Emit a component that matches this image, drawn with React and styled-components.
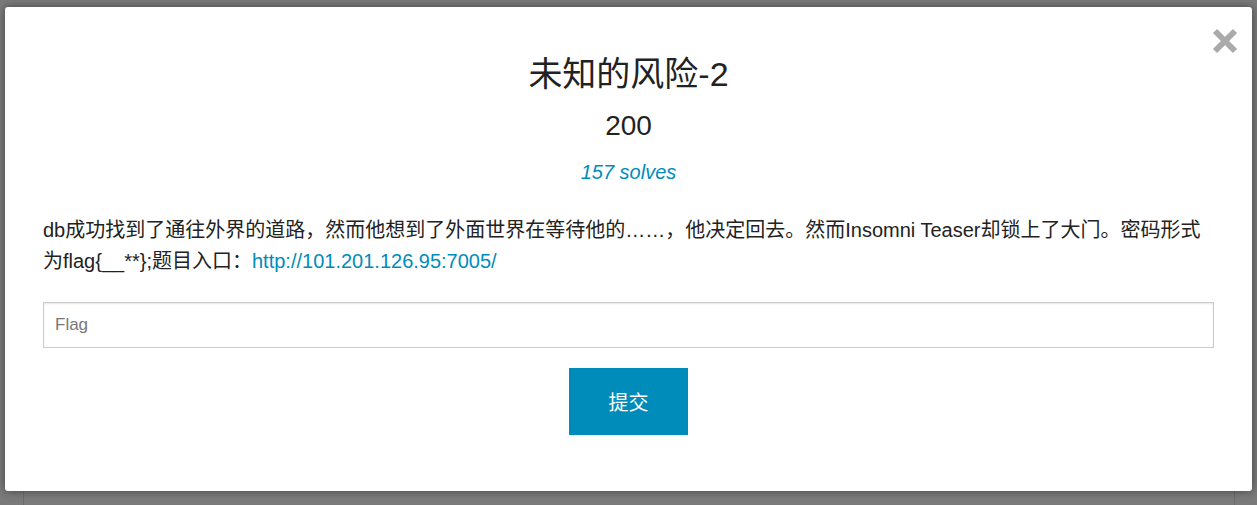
import React from 'react';
import styled, { createGlobalStyle } from 'styled-components';

const GlobalStyle = createGlobalStyle`
  html, body {
    margin: 0;
    padding: 0;
    background: #7a7a7a;
    font-family: "Liberation Sans", "Noto Sans CJK SC", sans-serif;
  }
`;

const Backdrop = styled.div`
  height: 505px;
  padding-top: 7px;
  box-sizing: border-box;
  display: flex;
  flex-direction: column;
  overflow: hidden;
`;

const Modal = styled.div`
  position: relative;
  margin: 0 5px;
  background: #fff;
  border-radius: 3px;
  box-shadow: 0 0 8px rgba(0, 0, 0, 0.45);
  padding: 47px 38px 56px;
  display: flex;
  flex-direction: column;
  color: #222;
`;

const BehindPage = styled.div`
  flex: 1;
  margin: 0 22px 0 23px;
  border-left: 1px solid #6a6a6a;
  border-right: 1px solid #6a6a6a;
`;

const CloseButton = styled.button`
  position: absolute;
  top: 21px;
  right: 14px;
  width: 26px;
  height: 26px;
  padding: 0;
  border: none;
  background: none;
  cursor: pointer;
  display: flex;
`;

const Title = styled.h2`
  margin: 0;
  font-size: 34px;
  font-weight: normal;
  line-height: 40px;
  text-align: center;
`;

const Points = styled.h3`
  margin: 12px 0 0;
  font-size: 28px;
  font-weight: normal;
  line-height: 40px;
  text-align: center;
`;

const Solves = styled.div`
  margin-top: 14px;
  font-size: 20px;
  line-height: 24px;
  font-style: italic;
  color: #008cba;
  text-align: center;
`;

const Description = styled.p`
  margin: 31px 0 0;
  font-size: 20px;
  line-height: 31px;
  color: #222;
`;

const Link = styled.a`
  color: #008cba;
  text-decoration: none;
`;

const FlagInput = styled.input`
  margin-top: 25px;
  height: 46px;
  box-sizing: border-box;
  width: 100%;
  border: 1px solid #ccc;
  box-shadow: inset 0 1px 2px rgba(0, 0, 0, 0.1);
  padding: 0 11px;
  font-family: inherit;
  font-size: 17px;
  color: #222;
  outline: none;
  &::placeholder {
    color: #777;
  }
`;

const SubmitButton = styled.button`
  margin: 20px auto 0;
  width: 119px;
  height: 67px;
  border: none;
  background: #008cba;
  color: #fff;
  font-family: inherit;
  font-size: 20px;
  cursor: pointer;
`;

export default function App() {
  return (
    <>
      <GlobalStyle />
      <Backdrop>
        <Modal>
          <CloseButton aria-label="close">
            <svg width="26" height="26" viewBox="0 0 26 26">
              <path d="M3 3 L23 23 M23 3 L3 23" stroke="#aaa" strokeWidth="6" strokeLinecap="butt" />
            </svg>
          </CloseButton>
          <Title>未知的风险-2</Title>
          <Points>200</Points>
          <Solves>157 solves</Solves>
          <Description>
            db成功找到了通往外界的道路，然而他想到了外面世界在等待他的……，他决定回去。然而Insomni Teaser却锁上了大门。密码形式为flag{'{'}__**{'}'};题目入口：
            <Link href="#">http://101.201.126.95:7005/</Link>
          </Description>
          <FlagInput placeholder="Flag" />
          <SubmitButton>提交</SubmitButton>
        </Modal>
        <BehindPage />
      </Backdrop>
    </>
  );
}
